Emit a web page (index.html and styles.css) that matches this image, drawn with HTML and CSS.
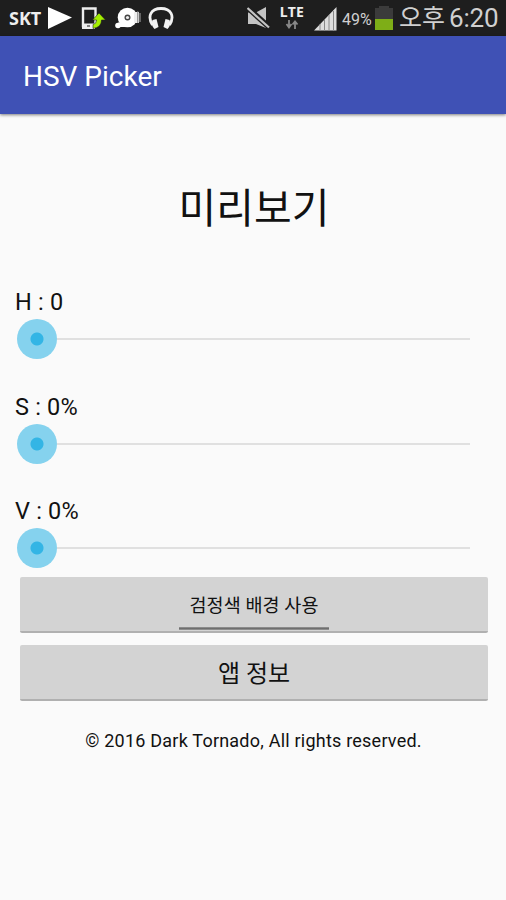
FILE: index.html
```html
<!DOCTYPE html>
<html lang="ko">
<head>
    <meta charset="UTF-8">
    <meta name="viewport" content="width=device-width, initial-scale=1.0">
    <title>HSV Picker</title>
    <link rel="stylesheet" href="styles.css">
</head>
<body>

<div class="status-bar">
    <span class="carrier">SKT</span>
    <svg class="icon-play" width="24" height="24" viewBox="0 0 24 24"><path d="M0 1L24 11.500L0 23Z" fill="#fff"/></svg>
    <svg class="icon-phone" width="25" height="24" viewBox="0 0 25 24">
        <path d="M2 2.500H14.500V20H2Z" fill="none" stroke="#eee" stroke-width="2.400"/>
        <path d="M1 17.500H14V23H1Z" fill="#eee"/>
        <path d="M6 20H9" stroke="#555" stroke-width="1.400"/>
        <path d="M12 22.500Q20.500 21.500 20.500 14H24.500L18 7L11.500 14H15.500Q15.500 18 12 18.500Z" fill="#a4f000" stroke="#1e1e1e" stroke-width=".6"/>
    </svg>
    <svg class="icon-disc" width="26" height="23" viewBox="0 0 26 23">
        <circle cx="12.500" cy="11.500" r="9.800" fill="#fff"/>
        <circle cx="3" cy="19.500" r="2.800" fill="#fff"/>
        <path d="M3 16.500H13V21H5Z" fill="#fff"/>
        <path d="M19 6H24V17H19Z" fill="#eee"/>
        <path d="M22.800 5V17" stroke="#777"/>
        <path d="M25 7V16" stroke="#aaa"/>
        <circle cx="12.500" cy="11.500" r="3" fill="#444"/>
        <circle cx="12.500" cy="11.500" r="1.600" fill="#eee"/>
    </svg>
    <svg class="icon-headphones" width="26" height="24" viewBox="0 0 26 24">
        <path d="M4.500 19C-1 10 3 2.500 13 2.500S27 10 21.500 19" fill="none" stroke="#f2f2f2" stroke-width="2.800"/>
        <path d="M4.500 14L8.500 13L10.500 21L6.500 23Q2.500 19 4.500 14ZM21.500 14L17.500 13L15.500 21L19.500 23Q23.500 19 21.500 14Z" fill="#f2f2f2"/>
    </svg>
    <svg class="icon-mute" width="25" height="24" viewBox="0 0 25 24">
        <path d="M1 6.500H9L19 1V22L9 18H1Z" fill="#c4c4c4"/>
        <path d="M1 2L22 21" stroke="#1e1e1e" stroke-width="5.500"/>
        <path d="M0.500 2L22 21.500" stroke="#c4c4c4" stroke-width="2.200"/>
    </svg>
    <div class="network">
        <span class="lte">LTE</span>
        <svg width="14" height="9" viewBox="0 0 14 9"><path d="M4 0V7M1.500 4L4 7.500L6.500 4M10 9V2M7.500 4.500L10 1.500L12.500 4.500" fill="none" stroke="#888" stroke-width="1.800"/></svg>
    </div>
    <svg class="icon-signal" width="24" height="25" viewBox="0 0 24 25">
        <path d="M0 24.500L22.500 1V24.500Z" fill="#ddd"/>
        <path d="M6 18V25M10.500 14V25M15 9V25M19.500 5V25" stroke="#888" stroke-width="1"/>
    </svg>
    <span class="percent">49%</span>
    <div class="battery"><div class="battery-level"></div></div>
    <span class="ampm">오후</span>
    <span class="clock">6:20</span>
</div>

<div class="app-bar"><span>HSV Picker</span></div>

<div class="content">
    <div class="preview">미리보기</div>

    <div class="slider-row">
        <div class="slider-label">H : 0</div>
        <div class="slider"><div class="thumb"></div><div class="track"></div></div>
    </div>
    <div class="slider-row">
        <div class="slider-label">S : 0%</div>
        <div class="slider"><div class="thumb"></div><div class="track"></div></div>
    </div>
    <div class="slider-row">
        <div class="slider-label">V : 0%</div>
        <div class="slider"><div class="thumb"></div><div class="track"></div></div>
    </div>

    <button class="button toggle"><span>검정색 배경 사용</span></button>
    <button class="button"><span>앱 정보</span></button>

    <div class="copyright"><span>© 2016 Dark Tornado, All rights reserved.</span></div>
</div>

</body>
</html>
```
FILE: styles.css
```css
* {
    box-sizing: border-box;
}

body {
    margin: 0;
    height: 900px;
    overflow: hidden;
    background-color: #fafafa;
    color: #111;
    font-family: Roboto, "Noto Sans CJK KR", sans-serif;
    white-space: nowrap;
}

svg {
    display: block;
    flex: none;
}

.status-bar {
    display: flex;
    align-items: flex-start;
    height: 36px;
    padding-top: 6px;
    background-color: #1e1e1e;
    color: #d0d0d0;
}

.status-bar > * {
    flex: none;
}

.carrier {
    width: 39px;
    margin-left: 9px;
    color: #eee;
    font: bold 18px/24px "Noto Sans", sans-serif;
}

.icon-phone {
    margin-left: 9px;
}

.icon-disc {
    margin-left: 9px;
}

.icon-headphones {
    margin-left: 7px;
}

.icon-mute {
    margin-left: 73px;
}

.network {
    display: flex;
    flex-direction: column;
    align-items: center;
    width: 26px;
    margin-left: 7px;
}

.lte {
    height: 14px;
    color: #eee;
    font: bold 14px/11px "Noto Sans", sans-serif;
    letter-spacing: 0.3px;
}

.icon-signal {
    margin-left: 9px;
}

.percent {
    width: 33px;
    margin-left: 4px;
    font-size: 16px;
    line-height: 27px;
}

.battery {
    display: flex;
    align-items: flex-end;
    width: 18px;
    height: 24px;
    background-color: #3b3b3b;
    clip-path: polygon(0 2px, 4px 2px, 4px 0, 14px 0, 14px 2px, 100% 2px, 100% 100%, 0 100%);
}

.battery-level {
    width: 100%;
    height: 11px;
    background-color: #7eae17;
}

.ampm {
    width: 50px;
    margin-left: 6px;
    font-size: 25px;
    line-height: 25px;
}

.clock {
    font-size: 26px;
    line-height: 25px;
    letter-spacing: -0.2px;
}

.app-bar {
    display: flex;
    align-items: center;
    height: 78px;
    padding: 2px 0 0 23px;
    background-color: #3f51b5;
    box-shadow: 0 1px 3px rgba(0, 0, 0, 0.5);
    color: #fff;
    font-size: 28px;
}

.content {
    padding: 66px 15px 0;
}

.preview {
    height: 104px;
    padding-left: 2px;
    font-size: 41px;
    line-height: 58px;
    text-align: center;
}

.slider-row {
    height: 104.500px;
}

.slider-label {
    height: 34.500px;
    font-size: 23.500px;
    line-height: 36px;
    letter-spacing: 0.2px;
}

.slider {
    display: flex;
    align-items: center;
    width: 455px;
    height: 41px;
    padding-left: 2px;
}

.thumb {
    width: 40px;
    height: 40px;
    border-radius: 50%;
    background: radial-gradient(circle, #33b5e5 6px, #85d2ee 7px);
}

.track {
    flex: 1;
    height: 2px;
    background-color: #e0e0e0;
}

.button {
    display: flex;
    align-items: center;
    justify-content: center;
    width: 468px;
    height: 56px;
    margin: 0 0 12px 5px;
    padding: 0;
    border: 0;
    border-bottom: 2px solid #b0b0b0;
    border-radius: 2px;
    background-color: #d3d3d3;
    color: #111;
    font-family: inherit;
    font-size: 24px;
}

.toggle {
    flex-direction: column;
    justify-content: flex-end;
    margin-top: -21px;
    font-size: 18.500px;
}

.toggle span {
    line-height: 24px;
    letter-spacing: 0.1px;
}

.toggle::after {
    content: "";
    width: 150px;
    height: 3px;
    margin: 9px 0 1px;
    background: linear-gradient(#999, #666 60%, #aaa);
}

.copyright {
    margin-top: 28px;
    padding-left: 1px;
    font-size: 18px;
    line-height: 24px;
    letter-spacing: 0.22px;
    text-align: center;
}
```
